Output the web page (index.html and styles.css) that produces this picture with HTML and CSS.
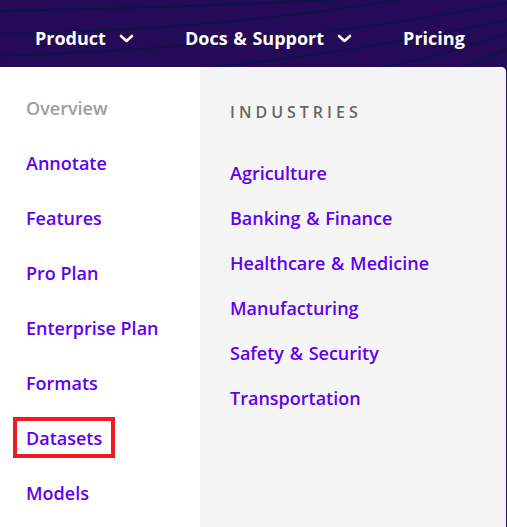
FILE: index.html
```html
<!DOCTYPE html>
<html lang="en">
<head>
<meta charset="utf-8">
<title>Menu</title>
<link rel="stylesheet" href="styles.css">
</head>
<body>
<header class="topbar">
  <svg class="waves" width="507" height="67" viewBox="0 0 507 67" aria-hidden="true">
    <path d="M0 11 Q180 8 370 -2" />
    <path d="M0 34 Q220 30 410 -2" />
    <path d="M0 56 Q300 45 507 3" />
    <path d="M190 70 Q360 52 507 20" />
    <path d="M360 72 Q450 55 507 33" />
    <path d="M450 72 Q485 60 507 48" />
  </svg>
  <nav class="nav">
    <a class="nav-item" href="#">Product <svg class="chev" width="15" height="9" viewBox="0 0 15 9"><path d="M2 2 L7.5 7 L13 2"/></svg></a>
    <a class="nav-item" href="#">Docs &amp; Support <svg class="chev" width="15" height="9" viewBox="0 0 15 9"><path d="M2 2 L7.5 7 L13 2"/></svg></a>
    <a class="nav-item" href="#">Pricing</a>
  </nav>
</header>
<section class="panel">
  <ul class="col-main">
    <li><a class="muted" href="#">Overview</a></li>
    <li><a href="#">Annotate</a></li>
    <li><a href="#">Features</a></li>
    <li><a href="#">Pro Plan</a></li>
    <li><a href="#">Enterprise Plan</a></li>
    <li><a href="#">Formats</a></li>
    <li><a class="highlight" href="#">Datasets</a></li>
    <li><a href="#">Models</a></li>
  </ul>
  <div class="col-side">
    <h3 class="side-title">INDUSTRIES</h3>
    <ul class="side-list">
      <li><a href="#">Agriculture</a></li>
      <li><a href="#">Banking &amp; Finance</a></li>
      <li><a href="#">Healthcare &amp; Medicine</a></li>
      <li><a href="#">Manufacturing</a></li>
      <li><a href="#">Safety &amp; Security</a></li>
      <li><a href="#">Transportation</a></li>
    </ul>
  </div>
</section>
</body>
</html>
```
FILE: styles.css
```css
* { box-sizing: border-box; }
html, body { margin: 0; padding: 0; }
body {
  background: #250a58;
  font-family: "Open Sans", "Noto Sans", sans-serif;
  width: 507px;
  height: 527px;
  overflow: hidden;
}
a { text-decoration: none; }
ul { list-style: none; margin: 0; padding: 0; }

.topbar {
  position: relative;
  height: 67px;
  background: #250a58;
}
.waves {
  position: absolute;
  left: 0;
  top: 0;
}
.waves path {
  fill: none;
  stroke: #0c1548;
  stroke-width: 1.6;
}
.nav {
  position: relative;
  display: flex;
  align-items: center;
  height: 67px;
  padding-left: 35px;
  padding-top: 9px;
  white-space: nowrap;
}
.nav-item {
  flex-shrink: 0;
  display: flex;
  align-items: center;
  color: #ffffff;
  font-weight: 700;
  font-size: 18px;
  letter-spacing: 0;
  word-spacing: 1px;
  margin-right: 51px;
}
.chev {
  margin-left: 13px;
}
.chev path {
  fill: none;
  stroke: #ffffff;
  stroke-width: 2.6;
  stroke-linecap: round;
  stroke-linejoin: round;
}

.panel {
  display: flex;
  width: 506px;
  height: 460px;
  background: #ffffff;
  border-radius: 0 5px 0 0;
  overflow: hidden;
}
.col-main {
  width: 200px;
  flex-shrink: 0;
  padding: 13px 0 0 13px;
  background: #ffffff;
}
.col-main li {
  height: 55px;
  display: flex;
  align-items: center;
}
.col-main a {
  display: inline-block;
  padding: 9px 13px 7px;
  line-height: 25px;
  font-size: 18px;
  font-weight: 600;
  color: #5f00ee;
}
.col-main a.muted { color: #9e9e9e; }
.col-main a.highlight {
  box-shadow: inset 0 0 0 4px #ec1c24;
}
.col-side {
  flex: 1;
  background: #f5f5f5;
  padding: 31px 0 0 30px;
}
.side-title {
  margin: 0;
  height: 28px;
  line-height: 28px;
  font-size: 16px;
  font-weight: 600;
  letter-spacing: 4px;
  color: #666666;
}
.side-list {
  margin-top: 25px;
}
.side-list li {
  height: 45px;
  line-height: 45px;
}
.side-list a {
  font-size: 18px;
  font-weight: 600;
  word-spacing: 1px;
  color: #5f00ee;
}
```
